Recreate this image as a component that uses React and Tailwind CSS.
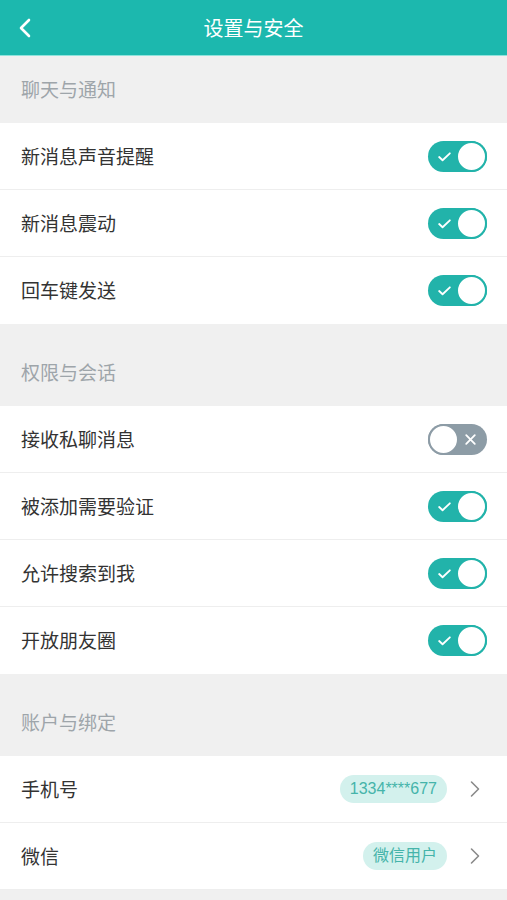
import React, { useState } from 'react';

const FONT = { fontFamily: '"Noto Sans CJK SC", "Liberation Sans", sans-serif' };

const Toggle = ({ on, onChange }) => (
  <button
    onClick={onChange}
    className={`relative w-[59px] h-[31px] rounded-full shrink-0 ${on ? 'bg-[#22b3aa]' : 'bg-[#8d9ca6]'}`}
  >
    {on ? (
      <>
        <svg className="absolute left-[9px] top-[8px] w-[15px] h-[15px]" viewBox="0 0 14 14" fill="none">
          <path d="M2 7.5l3.2 3L12 4" stroke="white" strokeWidth="1.7" strokeLinecap="round" strokeLinejoin="round" />
        </svg>
        <span className="absolute right-0 top-0 w-[31px] h-[31px] rounded-full bg-white border-2 border-[#22b3aa]" />
      </>
    ) : (
      <>
        <svg className="absolute right-[9px] top-[8px] w-[15px] h-[15px]" viewBox="0 0 14 14" fill="none">
          <path d="M3 3l8 8M11 3l-8 8" stroke="white" strokeWidth="1.7" strokeLinecap="round" />
        </svg>
        <span className="absolute left-0 top-0 w-[31px] h-[31px] rounded-full bg-white border-2 border-[#8d9ca6]" />
      </>
    )}
  </button>
);

const SectionTitle = ({ children, first }) => (
  <div className={`flex items-center px-[21px] h-[67px] text-[19px] text-[#9ea5aa] ${first ? '' : 'mt-[15px]'}`}>
    {children}
  </div>
);

const Row = ({ label, children }) => (
  <div className="flex items-center justify-between h-[67px] pl-[21px] pr-[20px] bg-white border-b border-[#eeeeee] last:border-b-0">
    <span className="text-[19px] text-[#333333]">{label}</span>
    {children}
  </div>
);

const Chevron = () => (
  <svg className="w-[10px] h-[18px] text-[#8a8a8a]" viewBox="0 0 10 18" fill="none">
    <path d="M1.5 2l7 7-7 7" stroke="currentColor" strokeWidth="1.6" strokeLinecap="round" strokeLinejoin="round" />
  </svg>
);

const Badge = ({ children }) => (
  <span
    className="px-[10px] h-[28px] flex items-center rounded-full bg-[#d3f1ed] text-[#45b4aa] text-[16px]"
    style={{ fontFamily: '"Liberation Sans", "Noto Sans CJK SC", sans-serif' }}
  >
    {children}
  </span>
);

const LinkRow = ({ label, value }) => (
  <div className="flex items-center justify-between h-[67px] pl-[21px] pr-[27px] bg-white border-b border-[#eeeeee]">
    <span className="text-[19px] text-[#333333]">{label}</span>
    <div className="flex items-center gap-[23px]">
      <Badge>{value}</Badge>
      <Chevron />
    </div>
  </div>
);

export default function App() {
  const [toggles, setToggles] = useState({
    sound: true,
    vibrate: true,
    enter: true,
    privateMsg: false,
    verify: true,
    search: true,
    moments: true,
  });

  const flip = (k) => setToggles((t) => ({ ...t, [k]: !t[k] }));

  return (
    <div className="min-h-[900px] bg-[#f0f0f0]" style={FONT}>
      {/* header */}
      <div className="relative h-[56px] bg-[#1cb8ae] flex items-center justify-center border-b border-[#8fe3dc]">
        <button className="absolute left-[18px] top-[18px]">
          <svg className="w-[14px] h-[20px]" viewBox="0 0 14 20" fill="none">
            <path d="M11 2L3 10l8 8" stroke="white" strokeWidth="2.6" strokeLinecap="round" strokeLinejoin="round" />
          </svg>
        </button>
        <h1 className="text-white text-[20px]">设置与安全</h1>
      </div>

      <SectionTitle first>聊天与通知</SectionTitle>
      <div className="bg-white">
        <Row label="新消息声音提醒"><Toggle on={toggles.sound} onChange={() => flip('sound')} /></Row>
        <Row label="新消息震动"><Toggle on={toggles.vibrate} onChange={() => flip('vibrate')} /></Row>
        <Row label="回车键发送"><Toggle on={toggles.enter} onChange={() => flip('enter')} /></Row>
      </div>

      <SectionTitle>权限与会话</SectionTitle>
      <div className="bg-white">
        <Row label="接收私聊消息"><Toggle on={toggles.privateMsg} onChange={() => flip('privateMsg')} /></Row>
        <Row label="被添加需要验证"><Toggle on={toggles.verify} onChange={() => flip('verify')} /></Row>
        <Row label="允许搜索到我"><Toggle on={toggles.search} onChange={() => flip('search')} /></Row>
        <Row label="开放朋友圈"><Toggle on={toggles.moments} onChange={() => flip('moments')} /></Row>
      </div>

      <SectionTitle>账户与绑定</SectionTitle>
      <div className="bg-white">
        <LinkRow label="手机号" value="1334****677" />
        <LinkRow label="微信" value="微信用户" />
      </div>
    </div>
  );
}
